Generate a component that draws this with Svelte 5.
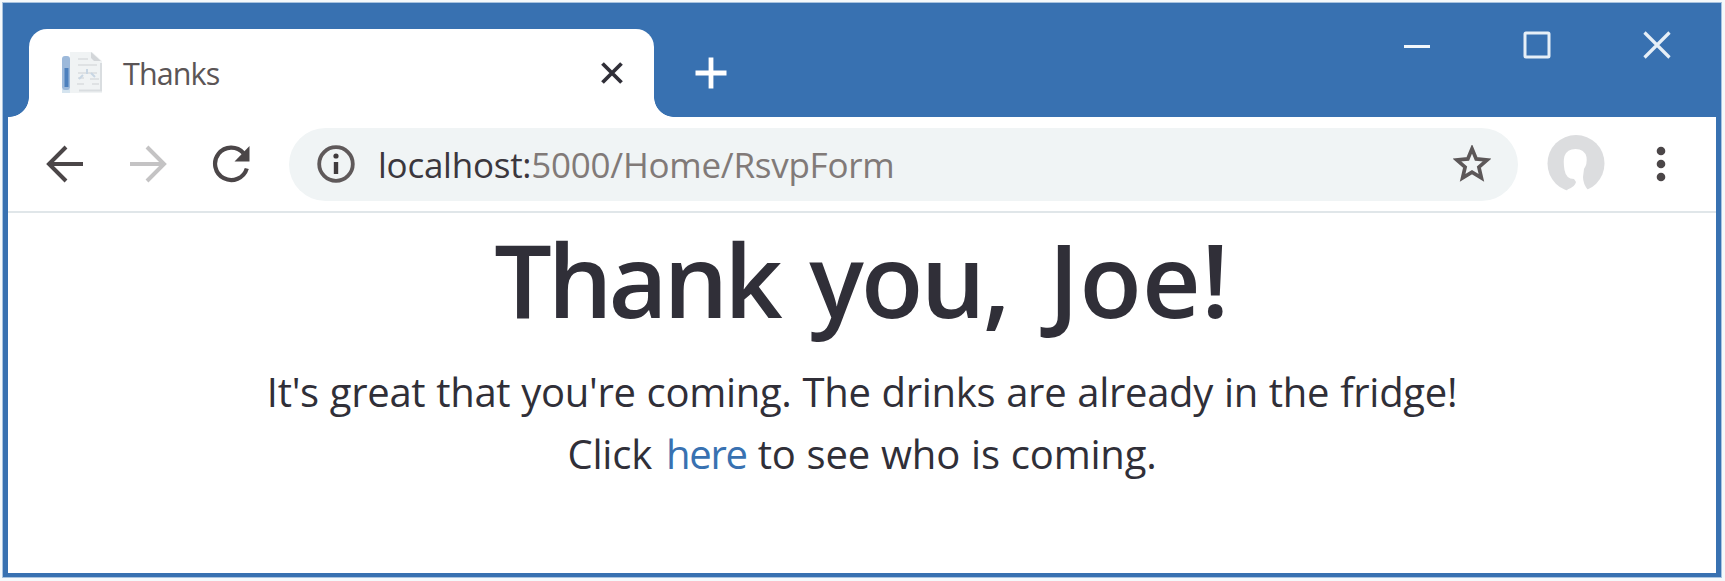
<script>
  const host = 'localhost:';
  const path = '5000/Home/RsvpForm';
</script>

<div class="screen">
  <div class="window">
    <header class="titlebar">
      <div class="tab">
        <svg class="favicon" width="42" height="44" viewBox="0 0 42 44">
          <path d="M9 1H31L41 10V42H9Z" fill="#f0f3f4" />
          <path d="M30 1L40 10H33L30 7Z" fill="#d3d6d9" />
          <path d="M17 8H27M17 14H36M17 22H36M17 27H23M29 28H38M16 33H23M31 33H38" stroke="#dfe2e4" stroke-width="2" />
          <path d="M18 39.500H40V12" fill="none" stroke="#d9dde0" stroke-width="2" />
          <path d="M26 18V23M22 24L18 28M30 22L34 26" stroke="#c8d6e3" stroke-width="2" />
          <path d="M1 38H9V42H1Z" fill="#d5e4ef" />
          <rect x="1" y="5" width="8" height="34" rx="3" fill="#9db9da" />
          <rect x="3.500" y="17" width="4" height="19" fill="#4d80bd" />
        </svg>
        <span class="tab-title">Thanks</span>
        <svg class="tab-close" width="24" height="24" viewBox="0 0 24 24">
          <path d="M2.500 2.500L21.500 21.500M21.500 2.500L2.500 21.500" stroke="#302f38" stroke-width="3.800" />
        </svg>
      </div>
      <svg class="new-tab" width="32" height="32" viewBox="0 0 32 32">
        <path d="M16 .5V31.500M.5 16H31.500" stroke="#fff" stroke-width="4.800" />
      </svg>
      <div class="controls">
        <svg width="28" height="28" viewBox="0 0 28 28"><path d="M1 15.500H27" stroke="#f2f7fb" stroke-width="3" /></svg>
        <svg width="28" height="28" viewBox="0 0 28 28"><rect x="2" y="2" width="24" height="24" rx="1" fill="none" stroke="#e6eff7" stroke-width="3" /></svg>
        <svg width="28" height="28" viewBox="0 0 28 28"><path d="M1.500 1.500L26.500 26.500M26.500 1.500L1.500 26.500" stroke="#e6eff7" stroke-width="3.200" /></svg>
      </div>
    </header>

    <nav class="toolbar">
      <svg class="back" width="38" height="38" viewBox="0 0 38 38">
        <path d="M37 19H4M20 2L3 19L20 36" fill="none" stroke="#4b4648" stroke-width="4" />
      </svg>
      <svg class="forward" width="38" height="38" viewBox="0 0 38 38">
        <path d="M1 19H34M18 2L35 19L18 36" fill="none" stroke="#c4c3c4" stroke-width="4" />
      </svg>
      <svg class="reload" width="38" height="38" viewBox="0 0 38 38">
        <path d="M31.500 8.200A16.200 16.200 0 1 0 34.800 23.500" fill="none" stroke="#4b4648" stroke-width="4.200" />
        <path d="M37.500 1V16.500H22.500Z" fill="#4b4648" />
      </svg>
      <div class="address">
        <svg class="info" width="38" height="38" viewBox="0 0 38 38">
          <circle cx="19" cy="19" r="16.800" fill="none" stroke="#5f595a" stroke-width="3.800" />
          <circle cx="19" cy="11" r="2.600" fill="#403b3d" />
          <path d="M19 17V29" stroke="#403b3d" stroke-width="4.400" />
        </svg>
        <span class="url"><span class="host">{host}</span>{path}</span>
        <svg class="star" width="38" height="38" viewBox="0 0 38 38">
          <path d="M19 3.800L23.200 13.900L34.200 14.900L25.900 22.100L28.400 32.900L19 27.200L9.600 32.900L12.100 22.100L3.800 14.900L14.800 13.900Z" fill="none" stroke="#5c5758" stroke-width="3.700" />
        </svg>
      </div>
      <svg class="avatar" width="60" height="60" viewBox="0 0 60 60">
        <circle cx="30" cy="29.500" r="28.500" fill="#dcdddf" />
        <path d="M20 59L21.500 55.500Q29 53 30 48L28 45Q20 45 18.500 36Q17 27 18.500 22Q21 15 29.500 15Q38.500 15 40.500 23Q41.500 30 38 35L37 43Q37 50 42 56L38 60H21Z" fill="#fff" />
      </svg>
      <svg class="menu" width="10" height="36" viewBox="0 0 10 36">
        <circle cx="5" cy="5" r="4.300" fill="#4b4648" />
        <circle cx="5" cy="18" r="4.300" fill="#4b4648" />
        <circle cx="5" cy="31" r="4.300" fill="#4b4648" />
      </svg>
    </nav>

    <main>
      <h1><span class="thank">Thank</span> <span class="you">you,</span> <span class="name">Joe!</span></h1>
      <p class="message">It's great that you're coming. The drinks are already in the fridge!</p>
      <p class="followup">Click <span class="link">here</span> to see who is coming.</p>
    </main>
  </div>
</div>

<style>
  .screen {
    box-sizing: border-box;
    width: 1725px;
    height: 581px;
    padding: 2px 3px 3px 2px;
    background: #f5f9fb;
    font-family: "Open Sans", "Noto Sans", sans-serif;
    color: #302f38;
  }
  .window {
    box-sizing: border-box;
    height: 576px;
    border: 1px solid #a8c3df;
    background: #3871b1;
    padding: 0 4px 4px;
    display: flex;
    flex-direction: column;
  }
  svg { display: block; flex: none; }

  .titlebar {
    height: 114px;
    flex: none;
    display: flex;
    align-items: flex-start;
  }
  .tab {
    box-sizing: border-box;
    position: relative;
    width: 625px;
    height: 88px;
    margin: 26px 0 0 22px;
    padding: 0 30px 0 32px;
    border-radius: 18px 18px 0 0;
    background: #fff;
    display: flex;
    align-items: center;
  }
  .tab::before,
  .tab::after {
    content: "";
    position: absolute;
    bottom: 0;
    width: 20px;
    height: 20px;
  }
  .tab::before {
    right: 100%;
    background: radial-gradient(circle at 0 0, transparent 19.500px, #fff 20.200px);
  }
  .tab::after {
    left: 100%;
    background: radial-gradient(circle at 100% 0, transparent 19.500px, #fff 20.200px);
  }
  .tab-title {
    margin: 0 0 1px 20px;
    font-size: 30.500px;
    letter-spacing: -0.900px;
    line-height: 40px;
    color: #5b5556;
    flex: 1;
  }
  .new-tab { margin: 54px 0 0 41px; }
  .controls {
    display: flex;
    gap: 92px;
    margin: 27.500px 46px 0 auto;
  }

  .toolbar {
    box-sizing: border-box;
    flex: none;
    height: 96px;
    margin: 0 1px;
    padding: 11px 50px 11px 38px;
    border-bottom: 2px solid #e0e6e9;
    background: #fff;
    display: flex;
    align-items: center;
  }
  .back, .forward { margin-right: 45px; }
  .address {
    width: 1229px;
    height: 73px;
    margin-left: 39px;
    border-radius: 37px;
    background: #f0f4f5;
    display: flex;
    align-items: center;
  }
  .info { margin-left: 28px; }
  .url {
    margin: 1px 0 0 23px;
    flex: 1;
    font-size: 35px;
    line-height: 60px;
    letter-spacing: -0.250px;
    color: #817a78;
  }
  .host { color: #3b373d; }
  .star { margin-right: 27px; }
  .avatar { margin-left: 28px; }
  .menu { margin-left: auto; }

  main {
    flex: 1;
    margin: 0 1px;
    padding-top: 11px;
    background: #fff;
    text-align: center;
  }
  h1 {
    margin: 0;
    font-size: 102px;
    font-weight: 600;
    line-height: 110px;
    letter-spacing: -0.900px;
    white-space: nowrap;
  }
  .thank { letter-spacing: -4.100px; margin-right: 5px; }
  .you { letter-spacing: -2.700px; margin-right: 15px; }
  .name { letter-spacing: 0.400px; }
  p {
    margin: 0;
    font-size: 40px;
    line-height: 62.500px;
    word-spacing: 0.830px;
  }
  .message { margin-top: 26.500px; letter-spacing: -0.300px; }
  .followup { letter-spacing: -0.200px; }
  .link { color: #3871b1; margin-left: 3px; letter-spacing: -1.300px; }
</style>
